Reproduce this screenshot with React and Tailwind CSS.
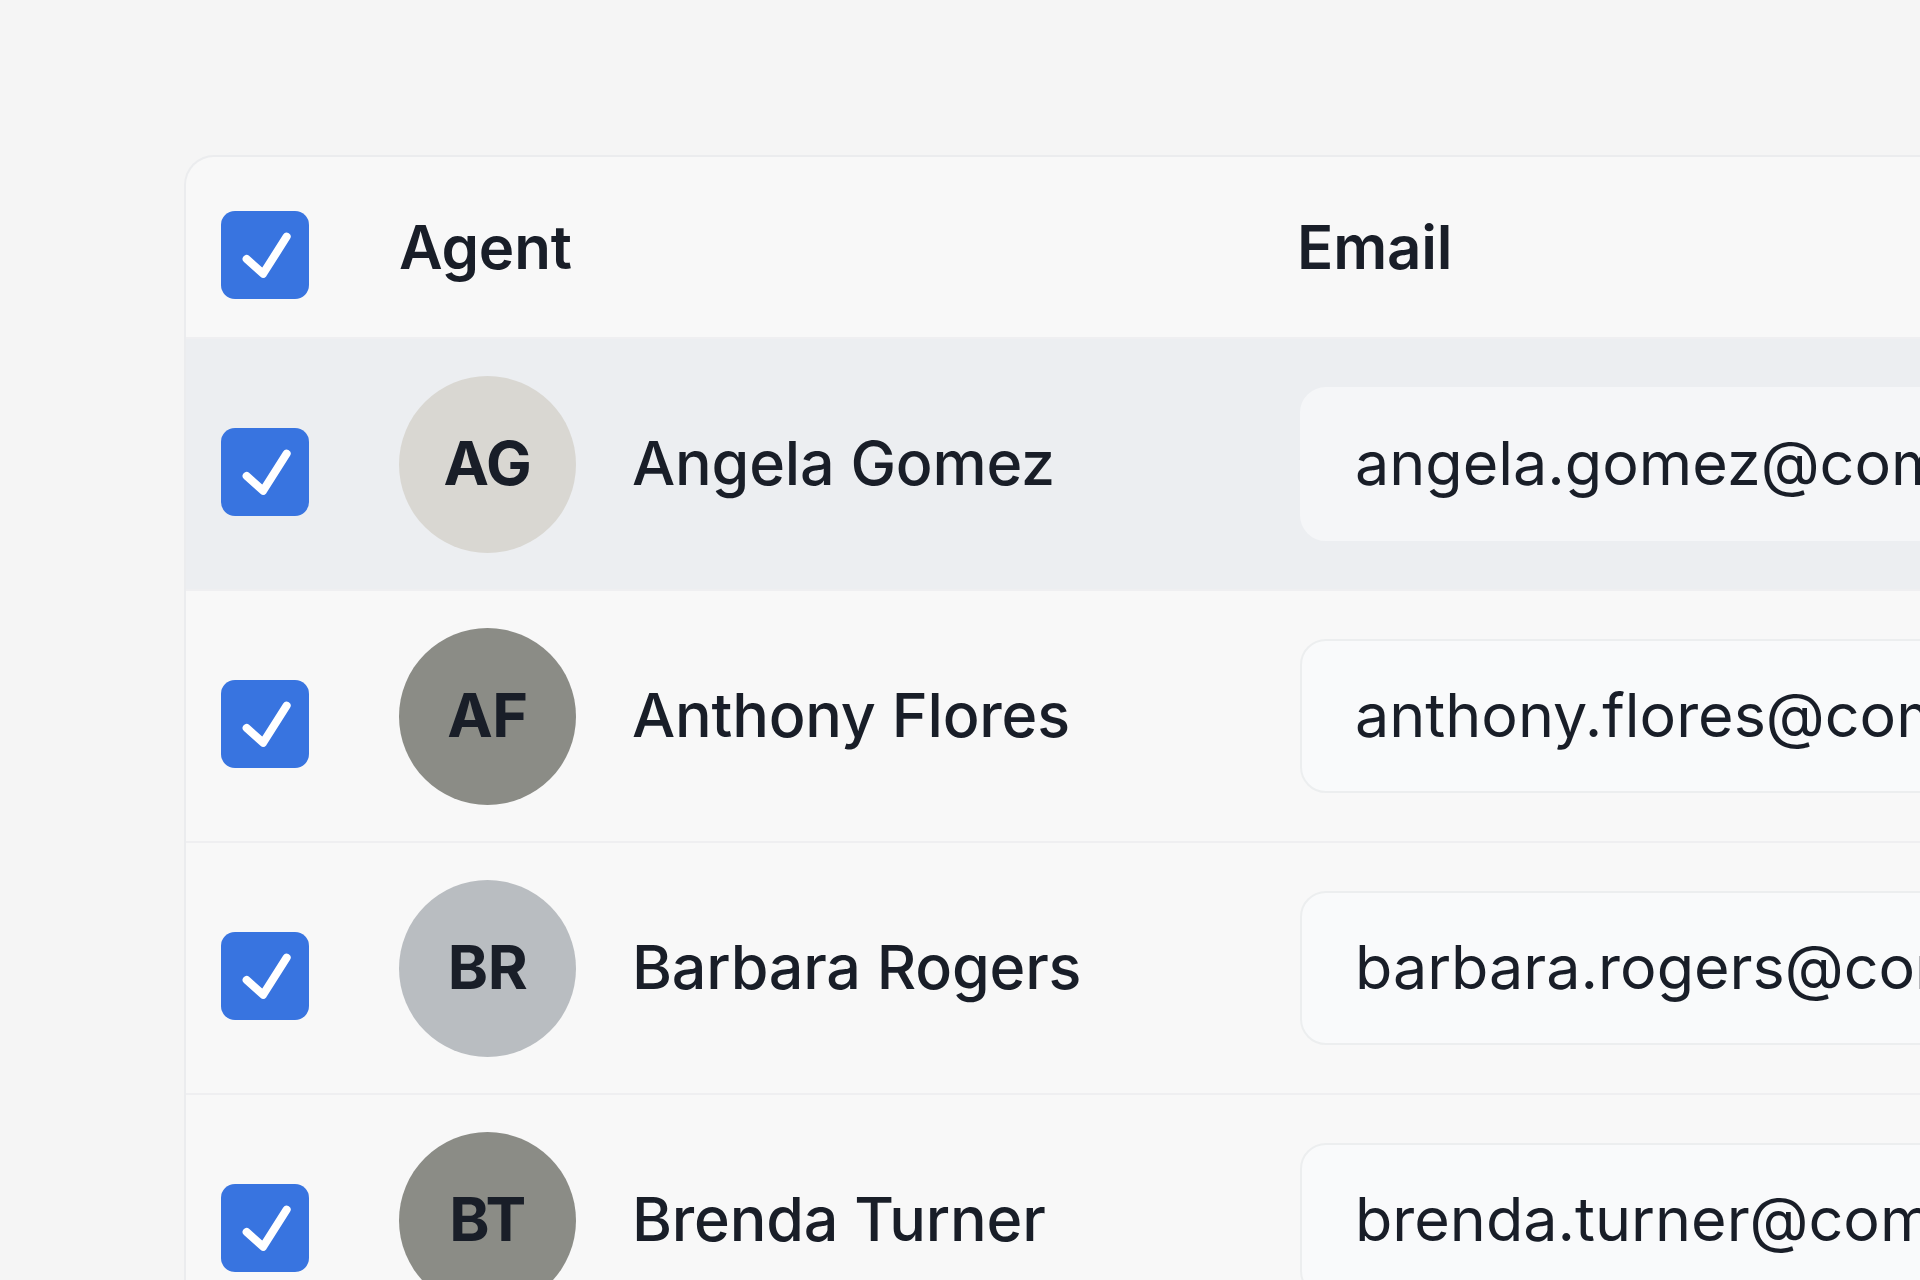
const agents = [
  { initials: 'AG', name: 'Angela Gomez', email: 'angela.gomez@company.com', avatar: 'bg-[#d9d7d2]', active: true },
  { initials: 'AF', name: 'Anthony Flores', email: 'anthony.flores@company.com', avatar: 'bg-[#8b8c86]' },
  { initials: 'BR', name: 'Barbara Rogers', email: 'barbara.rogers@company.com', avatar: 'bg-[#b9bdc1]' },
  { initials: 'BT', name: 'Brenda Turner', email: 'brenda.turner@company.com', avatar: 'bg-[#8b8c86]' },
]

function Checkbox() {
  return (
    <div className="flex h-[88px] w-[88px] shrink-0 translate-y-2 items-center justify-center rounded-[14px] bg-[#3874e0]">
      <svg viewBox="0 0 24 24" className="h-[88px] w-[88px]" fill="none">
        <path
          d="M7 13.1l4.5 4L17.9 7"
          stroke="white"
          strokeWidth="2.2"
          strokeLinecap="round"
          strokeLinejoin="round"
        />
      </svg>
    </div>
  )
}

function AgentRow({ agent }) {
  return (
    <div
      className={
        'flex h-[252px] items-center border-t-2 border-[#efeff1] pl-[35px] ' +
        (agent.active ? 'bg-[#eceef1]' : '')
      }
    >
      <Checkbox />
      <div className="ml-[90px] flex w-[898px] shrink-0 items-center gap-[56px]">
        <div
          className={
            'flex h-[177px] w-[177px] shrink-0 items-center justify-center rounded-full text-[61px] font-bold tracking-[-0.5px] text-[#191e28] ' +
            agent.avatar
          }
        >
          {agent.initials}
        </div>
        <span className="text-[61px] font-medium tracking-[-0.2px] text-[#191e28]">{agent.name}</span>
      </div>
      <div
        className={
          'ml-[3px] flex h-[154px] w-[800px] shrink-0 items-center rounded-[26px] border-2 pl-[53px] text-[61px] font-normal text-[#191e28] ' +
          (agent.active ? 'border-[#f5f6f8] bg-[#f5f6f8]' : 'border-[#eceeef] bg-[#f9fafb]')
        }
      >
        {agent.email}
      </div>
    </div>
  )
}

export default function App() {
  return (
    <div className="h-[1280px] w-[1920px] overflow-hidden bg-[#f5f5f5] font-['Inter',sans-serif]">
      <div className="ml-[184px] mt-[155px] w-[2000px] rounded-tl-[30px] border-l-2 border-t-2 border-[#ebecee] bg-[#f8f8f8]">
        <div className="flex h-[180px] items-center pl-[35px]">
          <Checkbox />
          <div className="ml-[90px] w-[898px] shrink-0 text-[60px] font-semibold tracking-[-0.2px] text-[#191e28]">
            Agent
          </div>
          <div className="text-[60px] font-semibold tracking-[-0.2px] text-[#191e28]">Email</div>
        </div>
        {agents.map(a => (
          <AgentRow key={a.initials} agent={a} />
        ))}
      </div>
    </div>
  )
}
